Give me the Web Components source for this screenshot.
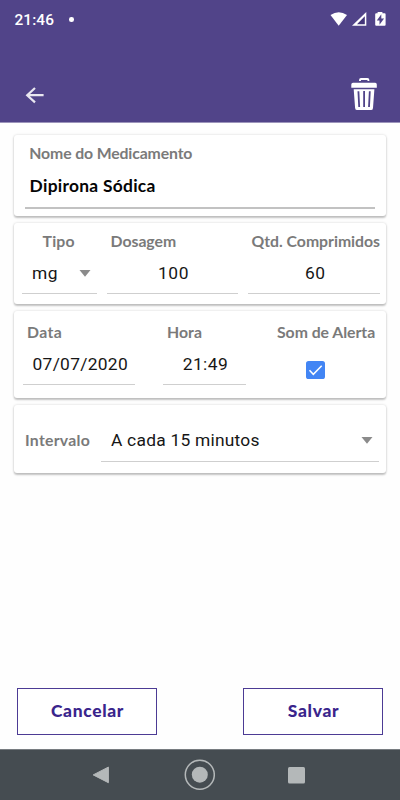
<!DOCTYPE html>
<html lang="pt-BR">
<head>
<meta charset="utf-8">
<meta name="viewport" content="width=device-width">
<title>Medicamento</title>
<style>
html,body{margin:0;height:100%;background:#fefefe}
body{overflow:hidden;font-family:Lato,sans-serif}
</style>
</head>
<body>
<med-app></med-app>
<script>
function define(name, html, init) {
  const t = document.createElement('template');
  t.innerHTML = html;
  customElements.define(name, class extends HTMLElement {
    connectedCallback() {
      if (this.shadowRoot) return;
      this.attachShadow({mode: 'open'}).append(t.content.cloneNode(true));
      if (init) init.call(this, this.shadowRoot);
    }
  });
}

// Single line of text; "w" tracks the letters out to the given width.
define('fit-text', `<style>
:host{display:block;height:20px;line-height:20px;white-space:nowrap}
span{display:inline-block}
:host([kind=label]){font:700 15.8px/20px Lato,sans-serif;color:#7a7a7a}
:host([kind=name]){font:700 17.4px/20px Lato,sans-serif;color:#050505}
:host([kind=value]){font:400 17.4px/20px Roboto,sans-serif;color:#161616}
:host([kind=button]){font:900 17.4px/20px Lato,sans-serif;color:#3a258c}
:host([kind=clock]){font:500 15.4px/20px Roboto,sans-serif;color:#fff}
</style><span><slot></slot></span>`, function (root) {
  const s = root.querySelector('span'), w = +this.getAttribute('w');
  if (!w) return;
  const n = this.textContent.length;
  const d = (w - s.getBoundingClientRect().width) / n;
  s.style.letterSpacing = d.toFixed(3) + 'px';
});

define('status-bar', `<style>
:host{display:flex;height:38px;box-sizing:border-box;padding:10px 14px 0 14.5px}
i{width:4.6px;height:4.6px;border-radius:50%;background:#fff;margin:7px 0 0 15px}
svg{display:block;margin:-1px 0 0 auto}
</style><fit-text kind="clock" w="39.5">21:46</fit-text><i></i>
<svg width="57" height="18" viewBox="0 0 57 18"><path d="M1.5 6Q9.7.4 18 6L9.7 16.8Z" fill="#fff"/><path d="M37.3 3v13.8H23Z" fill="#fff"/><path d="M35.8 7.2v8H28Z" fill="#433579"/><path d="M48.6 4.3V3h4.8v1.3h2.2q1 0 1 1v10.5q0 1-1 1h-8.4q-1 0-1-1V5.3q0-1 1-1Z" fill="#fff"/><path d="M52.3 5.2 47.8 11.4h2.7v4.4l4.6-6.3h-2.8Z" fill="#514489"/></svg>`);

define('app-header', `<style>
:host{display:block;height:122px;background:#514489;border-bottom:1px solid #9c94bb}
div{display:flex;justify-content:space-between;padding:38px 22px 0 25px}
svg{display:block}
</style><status-bar></status-bar><div>
<svg width="20" height="20" viewBox="0 0 20 20" style="margin-top:9px"><path d="M18.6 10.2H2.2M10 3 2.2 10.2 10 17.4" fill="none" stroke="#e9e7f0" stroke-width="2.2"/></svg>
<svg width="28" height="35" viewBox="0 0 28 35"><path d="M10 5.1V4q0-1 1-1h6.4q1 0 1 1v1.1" fill="none" stroke="#fff" stroke-width="1.9"/><path d="M3 6.7h22.2q1.6 0 1.6 1.7v3.3H1.3V8.4Q1.3 6.7 3 6.7ZM3.7 13.3h20.7L23 31.9q-.2 2.2-2 2.2H7.2q-1.9 0-2.1-2.2Z" fill="#fff"/><path d="M8.4 15.2 9.2 31M14.1 15v16M19.8 15.2 19 31" stroke="#514489" stroke-width="1.8"/></svg>
</div>`);

define('med-card', `<style>
:host{display:flex;box-sizing:border-box;height:var(--h);background:#fff;border-radius:3px;box-shadow:0 1.5px 2px rgba(0,0,0,.22),0 0 3px rgba(0,0,0,.12)}
</style><slot></slot>`);

// Labelled form field: label, value and rule stacked vertically.
define('med-field', `<style>
:host{display:flex;flex-direction:column;flex:none;box-sizing:border-box}
.v{display:flex;justify-content:space-between;border-bottom:var(--lw,1px) solid var(--line,#cfcfcf);height:var(--vh,34px);margin-top:var(--gap,12px);box-sizing:border-box}
::slotted(fit-text[slot=label]){margin-left:var(--lx,4px)}
</style><slot name="label"></slot><div class="v"><slot></slot></div>`);

define('drop-arrow', `<style>:host{display:block;width:12px;margin:7px 6px 0 0}svg{display:block}</style>
<svg width="12" height="7"><path d="M.5 0h11L6 6.7Z" fill="#8b8b8b"/></svg>`);

define('check-box', `<style>:host{display:block;width:19px;height:18px}svg{display:block}</style>
<svg width="19" height="18"><rect width="19" height="18" rx="2.6" fill="#4285f4"/><path d="m3.5 9.3 3.8 4L15.7 4.8" fill="none" stroke="#fff" stroke-width="1.5"/></svg>`);

define('med-button', `<style>
:host{display:block}
button{display:flex;justify-content:center;align-items:center;width:140px;height:47px;padding:0 0 1px 1px;background:#fff;border:1px solid #4c3b94;box-sizing:border-box}
</style><button><slot></slot></button>`);

define('nav-bar', `<style>
:host{display:flex;justify-content:space-between;align-items:center;height:51px;box-sizing:border-box;padding:0 95px 0 92px;background:#454c51;border-top:1px solid #777c80}
</style><svg width="18" height="18"><path d="M16.4 1.1v15.6L1.2 8.9Z" fill="#b4b8b9" stroke="#b4b8b9" stroke-linejoin="round"/></svg>
<svg width="32" height="32" viewBox="-.8 .3 32 32"><circle cx="16" cy="16" r="14.5" fill="none" stroke="#b4b8b9" stroke-width="1.5"/><circle cx="16" cy="16" r="8" fill="#b4b8b9"/></svg>
<svg width="17" height="17"><rect width="17" height="16.6" rx="1.5" fill="#b4b8b9"/></svg>`);

define('med-app', `<style>
:host{display:flex;flex-direction:column;height:800px;width:400px;background:#fefefe}
main{flex:1;display:flex;flex-direction:column;gap:7px;padding:12px 14px 0}
footer{display:flex;justify-content:space-between;padding:0 17px 14px}
.one{--h:81px;padding:8px 11px 0}
.one med-field{--line:#c2c2c2;--lw:2px;--vh:33px;width:350px}
.two{--h:81px;padding:8px 0 0 8px;gap:10px}
.two med-field{--gap:12px;--vh:31px}
.three{--h:87px;padding:11px 0 0 9px}
.three med-field{--gap:12px;--vh:31px}
.four{--h:68px;padding:25px 0 0 11px}
</style>
<app-header></app-header>
<main>
<med-card class="one"><med-field style="--gap:13px;--lx:4.3px"><fit-text slot="label" kind="label" w="163">Nome do Medicamento</fit-text><fit-text kind="name" w="126" style="margin-left:4.6px">Dipirona Sódica</fit-text></med-field></med-card>
<med-card class="two">
<med-field style="width:75px;--lx:20.6px"><fit-text slot="label" kind="label" w="32">Tipo</fit-text><fit-text kind="value" w="26" style="margin-left:10px">mg</fit-text><drop-arrow></drop-arrow></med-field>
<med-field style="width:131px;--lx:3.6px"><fit-text slot="label" kind="label" w="65.5">Dosagem</fit-text><fit-text kind="value" w="31" style="margin-left:51px">100</fit-text></med-field>
<med-field style="width:132px;--lx:3.5px"><fit-text slot="label" kind="label" w="128.5">Qtd. Comprimidos</fit-text><fit-text kind="value" w="20.7" style="margin-left:57px">60</fit-text></med-field>
</med-card>
<med-card class="three">
<med-field style="width:112px;margin-right:28px;--lx:4px"><fit-text slot="label" kind="label" w="35">Data</fit-text><fit-text kind="value" w="95.5" style="margin-left:9.5px">07/07/2020</fit-text></med-field>
<med-field style="width:83px;margin-right:30px;--lx:4px"><fit-text slot="label" kind="label" w="35">Hora</fit-text><fit-text kind="value" w="45.5" style="margin-left:19.7px">21:49</fit-text></med-field>
<med-field style="--lx:1px;--line:transparent"><fit-text slot="label" kind="label" w="98.2">Som de Alerta</fit-text><check-box style="margin:7px 0 0 30px"></check-box></med-field>
</med-card>
<med-card class="four">
<fit-text kind="label" w="65" style="width:76px">Intervalo</fit-text>
<med-field style="width:278px;--gap:0px;--vh:32px"><fit-text kind="value" w="148.7" style="margin-left:10px">A cada 15 minutos</fit-text><drop-arrow></drop-arrow></med-field>
</med-card>
</main>
<footer><med-button><fit-text kind="button" w="73">Cancelar</fit-text></med-button><med-button><fit-text kind="button" w="51.5">Salvar</fit-text></med-button></footer>
<nav-bar></nav-bar>`);
</script>
</body>
</html>
